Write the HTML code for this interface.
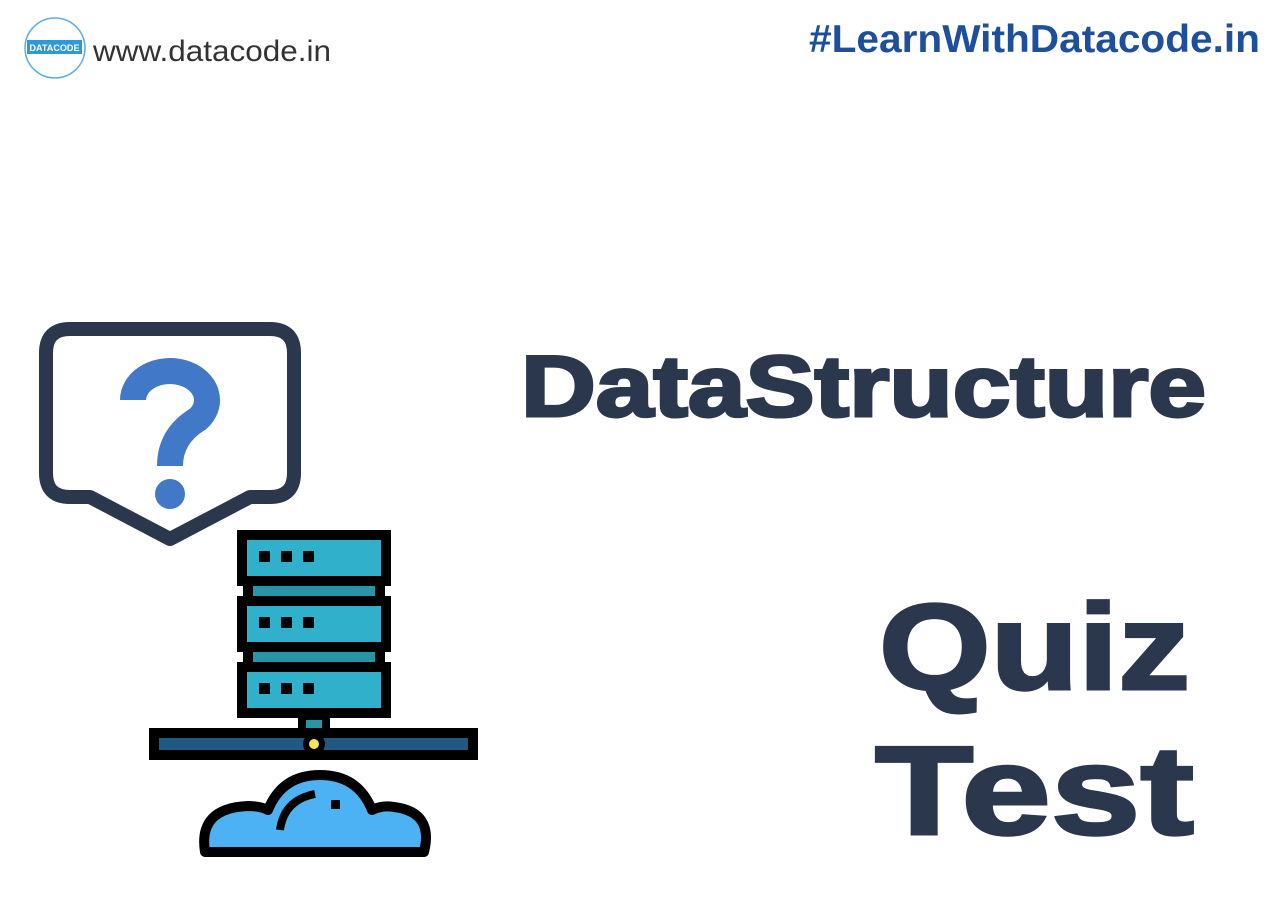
<!DOCTYPE html>
<html><head><meta charset="utf-8"><style>
html,body{margin:0;padding:0;background:#fff;}
svg{display:block}
</style></head><body>
<svg width="1280" height="909" viewBox="0 0 1280 909" xmlns="http://www.w3.org/2000/svg">
<rect width="1280" height="909" fill="#fff"/>
<!-- logo -->
<circle cx="55" cy="48" r="30" fill="none" stroke="#5aaee0" stroke-width="1.5"/>
<rect x="27" y="40" width="55" height="14" fill="#2a9ad8"/>
<text x="54.5" y="51" font-family="Liberation Sans, sans-serif" font-weight="bold" font-size="9" fill="#fff" text-anchor="middle" textLength="50" lengthAdjust="spacingAndGlyphs">DATACODE</text>
<text x="93" y="61" font-family="Liberation Sans, sans-serif" font-size="30" fill="#333" textLength="238" lengthAdjust="spacingAndGlyphs">www.datacode.in</text>
<text x="809" y="52" font-family="Liberation Sans, sans-serif" font-weight="bold" font-size="39" fill="#1e4f9c" textLength="451" lengthAdjust="spacingAndGlyphs">#LearnWithDatacode.in</text>
<!-- titles -->
<g font-family="Liberation Sans, sans-serif" font-weight="900" fill="#2b374c" stroke="#2b374c" stroke-width="3">
<text x="521" y="416" font-size="86" textLength="685" lengthAdjust="spacingAndGlyphs">DataStructure</text>
<text x="879" y="689" font-size="122" textLength="311" lengthAdjust="spacingAndGlyphs">Quiz</text>
<text x="875" y="834" font-size="126" textLength="319" lengthAdjust="spacingAndGlyphs">Test</text>
</g>
<!-- bubble -->
<path d="M70 329 H270 Q294 329 294 353 V473 Q294 497 270 497 H250 L170 539 L90 497 H70 Q46 497 46 473 V353 Q46 329 70 329 Z" fill="#fff" stroke="#2b374c" stroke-width="14" stroke-linejoin="round"/>
<path d="M133 400 A37 29 0 1 1 198 419 Q170 436 170 466" fill="none" stroke="#4178c8" stroke-width="26"/>
<circle cx="170" cy="494" r="15" fill="#4178c8"/>
<!-- server -->
<rect x="248" y="580" width="132" height="22" fill="#2795a8" stroke="#000" stroke-width="10"/>
<rect x="248" y="646" width="132" height="22" fill="#2795a8" stroke="#000" stroke-width="10"/>
<rect x="242" y="535" width="144" height="46" fill="#31b0cc" stroke="#000" stroke-width="10"/>
<rect x="242" y="601" width="144" height="46" fill="#31b0cc" stroke="#000" stroke-width="10"/>
<rect x="242" y="667" width="144" height="46" fill="#31b0cc" stroke="#000" stroke-width="10"/>
<g fill="#000">
<rect x="259" y="551" width="11" height="11"/><rect x="281" y="551" width="11" height="11"/><rect x="303" y="551" width="11" height="11"/>
<rect x="259" y="617" width="11" height="11"/><rect x="281" y="617" width="11" height="11"/><rect x="303" y="617" width="11" height="11"/>
<rect x="259" y="683" width="11" height="11"/><rect x="281" y="683" width="11" height="11"/><rect x="303" y="683" width="11" height="11"/>
</g>
<rect x="302" y="716" width="24" height="16" fill="#2795a8" stroke="#000" stroke-width="8"/>
<rect x="154" y="733" width="319" height="22" fill="#1f5a82" stroke="#000" stroke-width="10"/>
<circle cx="314" cy="744" r="11" fill="#000"/>
<circle cx="314" cy="744" r="5" fill="#f7e35a"/>
<!-- cloud -->
<path d="M205 852 Q198 808 248 806 Q260 806 268 810 Q282 775 320 775 Q358 775 372 810 Q382 805 394 807 Q434 812 424 852 Z" fill="#4db2f4" stroke="#000" stroke-width="10" stroke-linejoin="round"/>
<path d="M280 830 Q284 800 315 794" fill="none" stroke="#000" stroke-width="8"/>
<rect x="331" y="800" width="9" height="9" fill="#000"/>
</svg>
</body></html>
